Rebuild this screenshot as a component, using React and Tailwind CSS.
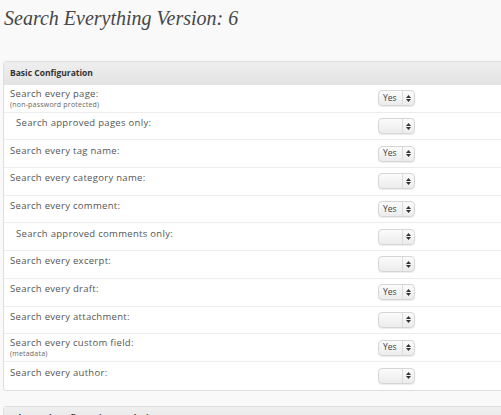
const rows = [
  { label: "Search every page:", note: "(non-password protected)", value: "Yes" },
  { label: "Search approved pages only:", indent: true, value: "" },
  { label: "Search every tag name:", value: "Yes" },
  { label: "Search every category name:", value: "" },
  { label: "Search every comment:", value: "Yes" },
  { label: "Search approved comments only:", indent: true, value: "" },
  { label: "Search every excerpt:", value: "" },
  { label: "Search every draft:", value: "Yes" },
  { label: "Search every attachment:", value: "" },
  { label: "Search every custom field:", note: "(metadata)", value: "Yes" },
  { label: "Search every author:", value: "" },
];

const Select = ({ value }) => (
  <div className="flex h-[16px] w-[37px] items-center rounded-[4px] border border-[#d6d6d6] bg-gradient-to-b from-[#fbfbfb] to-[#ececec] shadow-[0_1px_1px_rgba(0,0,0,0.08)]">
    <div className="flex-1 pl-[4px] text-[8.5px] leading-none text-[#444]">{value}</div>
    <div className="flex h-full w-[12px] flex-col items-center justify-center border-l border-[#dcdcdc] gap-[1px]">
      <svg width="5" height="3" viewBox="0 0 5 3"><path d="M0 3 L2.5 0 L5 3Z" fill="#333" /></svg>
      <svg width="5" height="3" viewBox="0 0 5 3"><path d="M0 0 L2.5 3 L5 0Z" fill="#333" /></svg>
    </div>
  </div>
);

export default function App() {
  return (
    <div className="h-[415px] w-[501px] overflow-hidden bg-[#f9f9f9] font-['Open_Sans',sans-serif]">
      <h1 className="pl-[4px] pt-[5px] font-['Liberation_Serif',serif] text-[20px] italic leading-[26px] text-[#464646]">
        Search Everything Version: 6
      </h1>

      <div className="ml-[3px] mt-[30px] w-[510px] rounded-[3px] border border-[#dfdfdf] bg-white">
        <div className="flex h-[23px] items-center border-b border-[#e4e4e4] bg-gradient-to-b from-[#efefef] to-[#e3e3e3] pl-[6px] text-[8.5px] font-bold text-[#333]">
          Basic Configuration
        </div>
        {rows.map((r, i) => (
          <div
            key={i}
            className={`flex h-[27.7px] items-center ${i < rows.length - 1 ? "border-b border-[#ececec]" : ""}`}
          >
            <div className={`w-[374px] ${r.indent ? "pl-[12px]" : "pl-[6px]"} ${r.note ? "" : "-mt-[6px]"}`}>
              <div className="text-[9.5px] leading-[12px] tracking-[0.3px] text-[#555]">{r.label}</div>
              {r.note && <div className="text-[7px] leading-[9px] tracking-[0.2px] text-[#666]">{r.note}</div>}
            </div>
            <Select value={r.value} />
          </div>
        ))}
      </div>

      <div className="ml-[3px] mt-[15px] w-[510px] rounded-[3px] border border-[#dfdfdf] bg-white">
        <div className="flex h-[23px] items-center bg-gradient-to-b from-[#efefef] to-[#e3e3e3] pl-[6px] text-[8.5px] font-bold text-[#333]">
          Advanced Configuration - Exclusion
        </div>
      </div>
    </div>
  );
}
